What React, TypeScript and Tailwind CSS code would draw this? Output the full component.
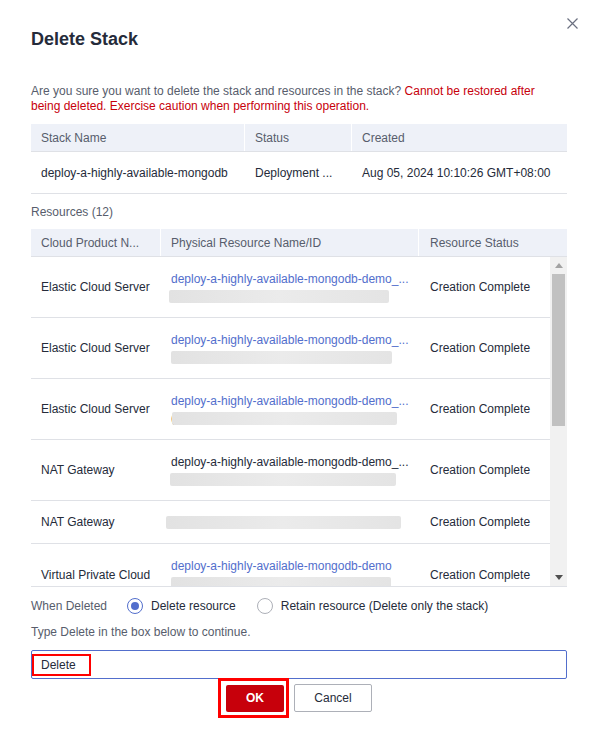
import React from "react";

type Row = {
  type: string;
  text?: string;
  link?: boolean;
  prefix?: string;
  barMl: number;
  barW: number;
};

const rows: Row[] = [
  { type: "Elastic Cloud Server", text: "deploy-a-highly-available-mongodb-demo_...", link: true, barMl: 8, barW: 220 },
  { type: "Elastic Cloud Server", text: "deploy-a-highly-available-mongodb-demo_...", link: true, prefix: ":", barMl: 10, barW: 221 },
  { type: "Elastic Cloud Server", text: "deploy-a-highly-available-mongodb-demo_...", link: true, prefix: "(", barMl: 11, barW: 225 },
  { type: "NAT Gateway", text: "deploy-a-highly-available-mongodb-demo_...", link: false, barMl: 9, barW: 226 },
  { type: "NAT Gateway", barMl: 5, barW: 235 },
  { type: "Virtual Private Cloud", text: "deploy-a-highly-available-mongodb-demo", link: true, prefix: ":", barMl: 10, barW: 220 },
];

function Bar({ ml, w }: { ml: number; w: number }) {
  return (
    <div
      className="h-[13px] rounded-[2px] bg-linear-to-r from-[#e2e2e2] via-[#ebebeb] to-[#e4e4e4] blur-[0.5px]"
      style={{ marginLeft: ml, width: w }}
    />
  );
}

export default function App() {
  return (
    <div
      className="relative w-[599px] h-[741px] bg-white text-[12px] text-[#575d6c]"
      style={{ fontFamily: '"Liberation Sans", Arial, sans-serif' }}
    >
      {/* close */}
      <button className="absolute left-[567px] top-[18px] w-[11px] h-[11px] flex items-center justify-center">
        <svg width="11" height="11" viewBox="0 0 11 11">
          <path d="M0.5 0.5 L10.5 10.5 M10.5 0.5 L0.5 10.5" stroke="#6b7080" strokeWidth="1.2" />
        </svg>
      </button>

      <div className="flex flex-col pl-[31px] pr-[32px] pt-[28px]">
        <h1 className="text-[18px] leading-[22px] font-bold text-[#252b3a]">Delete Stack</h1>

        <div className="mt-[34px] leading-[15px] text-[#575d6c]">
          <div>
            Are you sure you want to delete the stack and resources in the stack?{" "}
            <span className="text-[#c7000b]">Cannot be restored after</span>
          </div>
          <div className="text-[#c7000b]">being deleted. Exercise caution when performing this operation.</div>
        </div>

        {/* stack table */}
        <div className="mt-[10px] flex flex-col">
          <div className="flex h-[28px] bg-[#eef1f8] border-b border-[#dfe1e6] text-[#575d6c]">
            <div className="w-[214px] flex items-center pl-[10px] border-r border-white">Stack Name</div>
            <div className="w-[107px] flex items-center pl-[10px] border-r border-white">Status</div>
            <div className="flex-1 flex items-center pl-[10px]">Created</div>
          </div>
          <div className="flex h-[42px] border-b border-[#dfe1e6] text-[#252b3a]">
            <div className="w-[214px] flex items-center pl-[10px] whitespace-nowrap">deploy-a-highly-available-mongodb</div>
            <div className="w-[107px] flex items-center pl-[10px] whitespace-nowrap">Deployment ...</div>
            <div className="flex-1 flex items-center pl-[10px] whitespace-nowrap">Aug 05, 2024 10:10:26 GMT+08:00</div>
          </div>
        </div>

        <div className="h-[35px] flex items-center text-[#575d6c]">Resources (12)</div>

        {/* resources table */}
        <div className="flex flex-col">
          <div className="flex h-[28px] bg-[#eef1f8] border-b border-[#dfe1e6] text-[#575d6c]">
            <div className="w-[130px] flex items-center pl-[10px] border-r border-white whitespace-nowrap">Cloud Product N...</div>
            <div className="w-[258px] flex items-center pl-[10px] border-r border-white">Physical Resource Name/ID</div>
            <div className="flex-1 flex items-center pl-[11px]">Resource Status</div>
          </div>
          <div className="flex h-[330px] overflow-hidden border-b border-[#dfe1e6]">
            <div className="w-[519px] flex flex-col">
              {rows.map((r, i) => (
                <div
                  key={i}
                  className={`flex shrink-0 border-[#dfe1e6] text-[#252b3a] ${
                    i === 4 ? "h-[43px]" : "h-[61px]"
                  } ${i < rows.length - 1 ? "border-b" : ""}`}
                >
                  <div className="w-[130px] flex items-center pl-[10px] whitespace-nowrap">{r.type}</div>
                  <div className="w-[258px] flex flex-col justify-center">
                    {r.text && (
                      <div
                        className={`pl-[10px] h-[14px] leading-[14px] whitespace-nowrap ${
                          r.link ? "text-[#526ecc]" : "text-[#252b3a]"
                        }`}
                      >
                        {r.text}
                      </div>
                    )}
                    <div className={`relative ${r.text ? "mt-[4px]" : ""}`}>
                      {r.prefix && (
                        <span className="absolute left-[10px] top-[-1px] text-[#252b3a] leading-[14px]">{r.prefix}</span>
                      )}
                      <Bar ml={r.barMl} w={r.barW} />
                    </div>
                  </div>
                  <div className="flex-1 flex items-center pl-[11px] whitespace-nowrap">Creation Complete</div>
                </div>
              ))}
            </div>
            {/* scrollbar */}
            <div className="w-[17px] bg-[#f1f1f1] flex flex-col shrink-0">
              <div className="h-[17px] flex items-center justify-center">
                <svg width="8" height="5" viewBox="0 0 8 5">
                  <path d="M0 5 L4 0 L8 5 Z" fill="#a3a3a3" />
                </svg>
              </div>
              <div className="h-[152px] mx-[2px] bg-[#c1c1c1]" />
              <div className="flex-1" />
              <div className="h-[17px] flex items-center justify-center">
                <svg width="8" height="5" viewBox="0 0 8 5">
                  <path d="M0 0 L8 0 L4 5 Z" fill="#505050" />
                </svg>
              </div>
            </div>
          </div>
        </div>

        {/* when deleted */}
        <div className="h-[37px] flex items-center text-[#575d6c]">
          <span className="w-[96px]">When Deleted</span>
          <label className="flex items-center gap-[8px]">
            <span className="w-[16px] h-[16px] rounded-full border border-[#526ecc] flex items-center justify-center">
              <span className="w-[8px] h-[8px] rounded-full bg-[#526ecc]" />
            </span>
            <span className="text-[#252b3a]">Delete resource</span>
          </label>
          <label className="flex items-center gap-[8px] ml-[21px]">
            <span className="w-[16px] h-[16px] rounded-full border border-[#adb0b8]" />
            <span className="text-[#252b3a]">Retain resource (Delete only the stack)</span>
          </label>
        </div>

        <div className="h-[16px] leading-[16px] text-[#575d6c]">Type Delete in the box below to continue.</div>

        <div className="mt-[10px] h-[29px] border border-[#526ecc] rounded-[2px] flex items-center">
          <span className="h-[22px] border-2 border-[#ff0000] flex items-center pl-[7px] pr-[13px] text-[#252b3a] leading-none">
            Delete
          </span>
        </div>

        <div className="flex items-start ml-[187px] mt-[-1px]">
          <div className="w-[71px] h-[40px] border-[3px] border-[#ff0000] flex items-center justify-center pl-[3px]">
            <button className="w-[58px] h-[27px] bg-[#c7000b] text-white rounded-[2px] text-[12px] font-bold">
              OK
            </button>
          </div>
          <button className="ml-[5px] mt-[6px] w-[78px] h-[28px] border border-[#adb0b8] rounded-[2px] text-[#252b3a] bg-white text-[12px]">
            Cancel
          </button>
        </div>
      </div>
    </div>
  );
}
